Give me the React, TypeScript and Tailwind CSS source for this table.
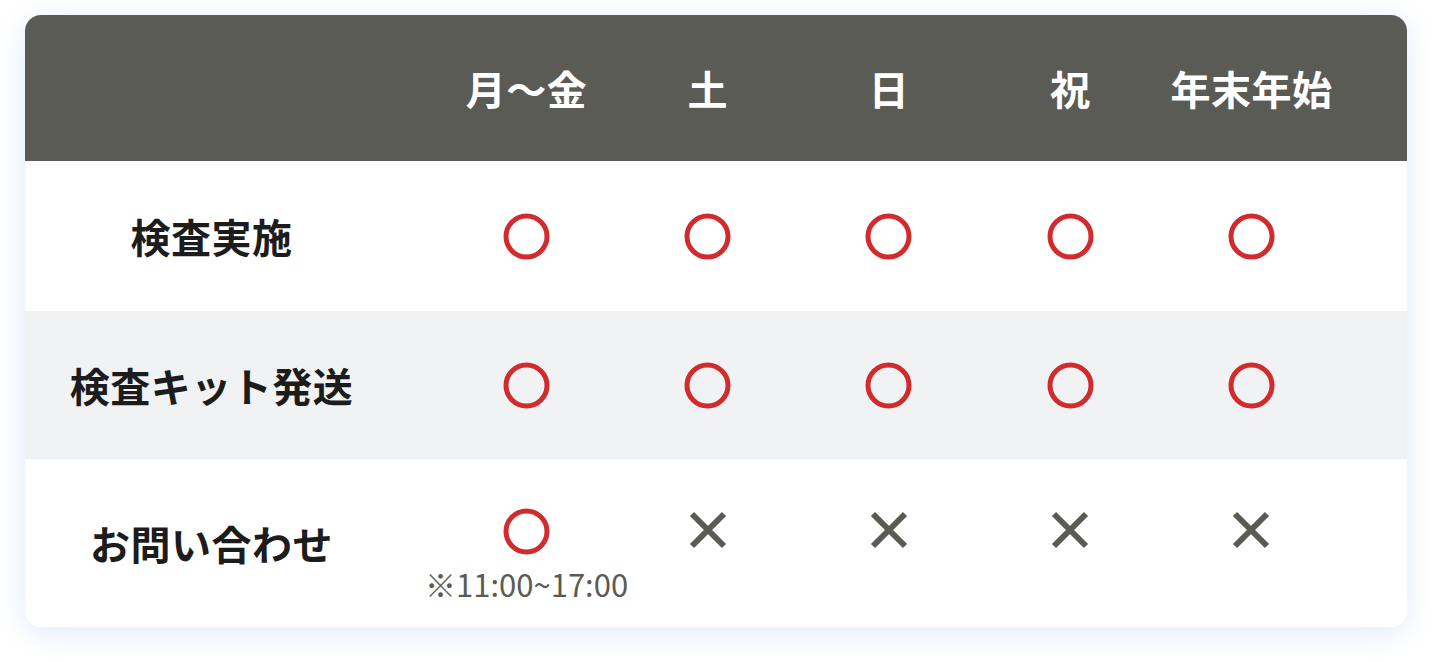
const days = ["月～金", "土", "日", "祝", "年末年始"];

type Mark = "o" | "x";

const rows: { label: string; marks: Mark[]; h: string; bg: string }[] = [
  { label: "検査実施", marks: ["o", "o", "o", "o", "o"], h: "h-[150px]", bg: "bg-white" },
  { label: "検査キット発送", marks: ["o", "o", "o", "o", "o"], h: "h-[148px]", bg: "bg-[#f1f2f4]" },
  { label: "お問い合わせ", marks: ["o", "x", "x", "x", "x"], h: "h-[168px]", bg: "bg-white" },
];

function Circle() {
  return (
    <svg width="47" height="47" viewBox="0 0 47 47" fill="none">
      <circle cx="23.5" cy="23.5" r="20.5" stroke="#d12b2e" strokeWidth="5" />
    </svg>
  );
}

function Cross() {
  return (
    <svg width="38" height="38" viewBox="0 0 38 38" fill="none">
      <path d="M3 3L35 35M35 3L3 35" stroke="#5b5b56" strokeWidth="6" />
    </svg>
  );
}

export default function App() {
  return (
    <div className="min-h-[662px] w-full bg-white px-[25px] pt-[15px] font-['Noto_Sans_CJK_JP','Noto_Sans',sans-serif]">
      <div className="w-[1382px] overflow-hidden rounded-[16px] bg-white shadow-[0_6px_28px_rgba(190,208,245,0.45)]">
        {/* Header */}
        <div className="flex h-[146px] items-center bg-[#5b5b56]">
          <div className="w-[373px]" />
          <div className="ml-[38px] mr-[65px] grid flex-1 grid-cols-5">
            {days.map((d) => (
              <div
                key={d}
                className="text-center text-[40px] font-bold leading-none tracking-[0.5px] text-white"
              >
                {d}
              </div>
            ))}
          </div>
        </div>

        {rows.map((row, i) => (
          <div key={row.label} className={`flex ${row.h} ${row.bg}`}>
            <div className="flex w-[373px] items-center justify-center text-[40px] font-bold leading-none tracking-[0.5px] text-[#1c1c1c]">
              {row.label}
            </div>
            {i < 2 ? (
              <div className="ml-[38px] mr-[65px] grid flex-1 grid-cols-5 items-center">
                {row.marks.map((m, j) => (
                  <div key={j} className="flex justify-center">
                    <Circle />
                  </div>
                ))}
              </div>
            ) : (
              <div className="ml-[38px] mr-[65px] grid flex-1 grid-cols-5">
                {row.marks.map((m, j) =>
                  m === "o" ? (
                    <div key={j} className="flex flex-col items-center pt-[49px]">
                      <Circle />
                      <div className="mt-[11px] whitespace-nowrap text-[31px] leading-[36px] text-[#5b5b56]">
                        ※11:00~17:00
                      </div>
                    </div>
                  ) : (
                    <div key={j} className="flex justify-center pt-[52px]">
                      <Cross />
                    </div>
                  )
                )}
              </div>
            )}
          </div>
        ))}
      </div>
    </div>
  );
}
